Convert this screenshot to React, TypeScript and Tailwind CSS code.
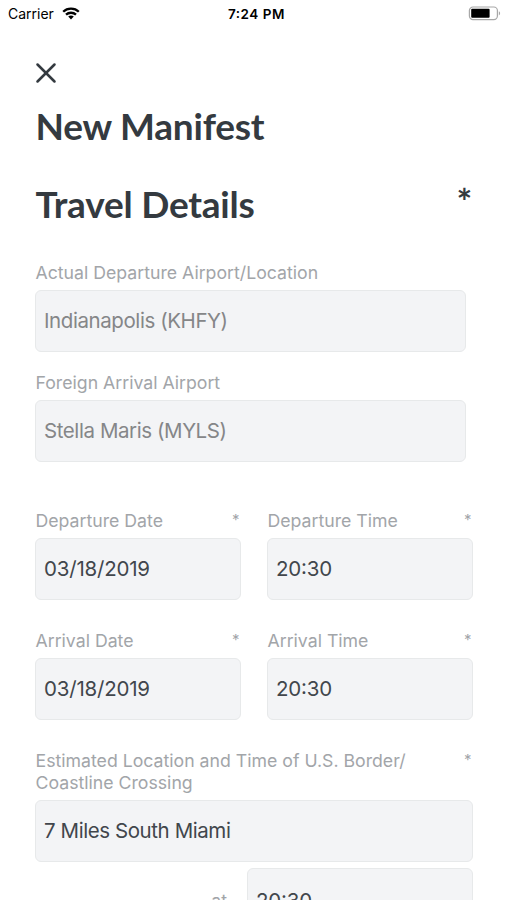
import { X } from 'lucide-react';
import clsx from 'clsx';

type ValueProps = {
  value: string;
  disabled?: boolean;
  tall?: boolean;
};

type FieldProps = {
  label: string;
  value: string;
  required?: boolean;
  disabled?: boolean;
  className?: string;
};

const Value = ({ value, disabled, tall }: ValueProps) => (
  <div
    className={clsx(
      'flex items-center rounded-md border border-[#e7e9ea] bg-[#f3f4f6] px-2 text-[20.5px]',
      tall ? 'h-[66px]' : 'h-[62px]',
      disabled ? 'text-[#858688]' : 'text-[#41464c]',
      /\d{2}[:/]/.test(value) ? "tracking-[-0.2px] [font-feature-settings:'case']" : 'tracking-[-0.42px]'
    )}
  >
    {value}
  </div>
);

const Field = ({ label, value, required, disabled, className }: FieldProps) => (
  <div className={className}>
    <div className="mb-[6.5px] flex justify-between pt-[0.5px] text-[17.7px] leading-[22px] text-[#a2a5a9]">
      <span className="whitespace-pre-line pl-[0.5px]">{label}</span>
      {required && <span className="pr-[1.5px] text-[15px] leading-5">*</span>}
    </div>
    <Value value={value} disabled={disabled} />
  </div>
);

const WifiIcon = () => (
  <svg width="18" height="13" viewBox="0 0 18 13" fill="none" stroke="#000" strokeWidth="2.3">
    <path d="M1.2 4.7C5.4 0.5 12.6 0.5 16.8 4.7" />
    <path d="M4 7.7C6.8 5.1 11.2 5.1 14 7.7" />
    <path d="M9 12.4L6.2 9.6C7.8 8.1 10.2 8.1 11.8 9.6Z" fill="#000" stroke="none" />
  </svg>
);

const BatteryIcon = () => (
  <svg width="33" height="15" viewBox="0 0 33 15" fill="none">
    <rect x="1.4" y="1" width="28" height="12.6" rx="3.6" stroke="#a8a8a8" strokeWidth="1.2" />
    <rect x="3.2" y="2.8" width="18.4" height="9" rx="1" fill="#000" />
    <path d="M30.8 5.2C32.6 5.9 32.6 8.7 30.8 9.4Z" fill="#a8a8a8" />
  </svg>
);

const StatusBar = () => (
  <header className="grid h-[27px] grid-cols-3 items-center pl-2 pr-[6px] text-black">
    <div className="flex items-center gap-2 text-[14px]">
      <span>Carrier</span>
      <WifiIcon />
    </div>
    <div className="pl-1 pt-px text-center text-[13.5px] font-semibold tracking-[0.55px] [font-feature-settings:'case']">
      7:24 PM
    </div>
    <div className="flex justify-end">
      <BatteryIcon />
    </div>
  </header>
);

const App = () => {
  return (
    <div className="h-[900px] w-[507px] overflow-hidden bg-white font-['Inter',sans-serif]">
      <StatusBar />
      <main className="pl-[35px] pr-[34px] pt-[29px]">
        <button type="button" aria-label="Close" className="-ml-1.5 block">
          <X size={34} strokeWidth={1.8} color="#343a40" />
        </button>
        <div className="pl-[0.5px] font-['Lato',sans-serif] text-[37px] font-bold leading-[46px] tracking-[-0.22px] text-[#343a40]">
          <h1 className="mt-[13px]">New Manifest</h1>
          <div className="mt-8 flex justify-between">
            <h2>Travel Details</h2>
            <span className="-mt-[3px] pr-px">*</span>
          </div>
        </div>

        <Field
          className="mt-[34px] w-[431px]"
          label="Actual Departure Airport/Location"
          value="Indianapolis (KHFY)"
          disabled
        />
        <Field
          className="mt-[19px] w-[431px]"
          label="Foreign Arrival Airport"
          value="Stella Maris (MYLS)"
          disabled
        />

        <div className="mt-[47px] grid grid-cols-2 gap-x-[26px] gap-y-[29px]">
          <Field label="Departure Date" value="03/18/2019" required />
          <Field label="Departure Time" value="20:30" required />
          <Field label="Arrival Date" value="03/18/2019" required />
          <Field label="Arrival Time" value="20:30" required />
        </div>

        <Field
          className="mt-[29px]"
          label={'Estimated Location and Time of U.S. Border/\nCoastline Crossing'}
          value="7 Miles South Miami"
          required
        />
        <div className="mt-[6px] flex items-center justify-end gap-5">
          <span className="text-[17.7px] text-[#a2a5a9]">at</span>
          <div className="w-[226px]">
            <Value value="20:30" tall />
          </div>
        </div>
      </main>
    </div>
  );
};

export default App;
